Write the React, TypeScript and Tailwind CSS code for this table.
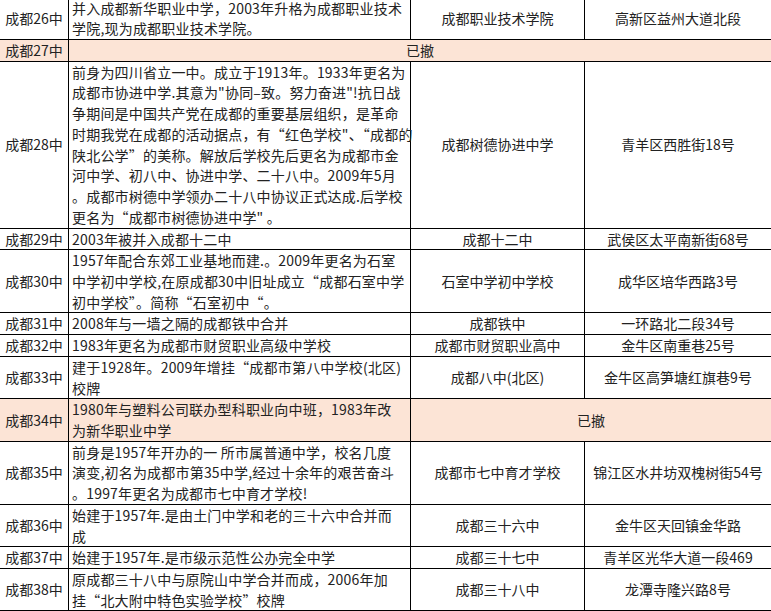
import React from "react";

type Row = {
  name: string;
  lines: string[];
  school?: string;
  addr?: string;
  closed?: "all" | "right";
};

const rows: Row[] = [
  {
    name: "成都26中",
    lines: ["并入成都新华职业中学，2003年升格为成都职业技术", "学院,现为成都职业技术学院。"],
    school: "成都职业技术学院",
    addr: "高新区益州大道北段",
  },
  { name: "成都27中", lines: ["已撤"], closed: "all" },
  {
    name: "成都28中",
    lines: [
      "前身为四川省立一中。成立于1913年。1933年更名为",
      "成都市协进中学.其意为\"协同–致。努力奋进\"!抗日战",
      "争期间是中国共产党在成都的重要基层组织，是革命",
      "时期我党在成都的活动据点，有“红色学校\"、“成都的",
      "陕北公学”的美称。解放后学校先后更名为成都市金",
      "河中学、初八中、协进中学、二十八中。2009年5月",
      "。成都市树德中学领办二十八中协议正式达成.后学校",
      "更名为“成都市树德协进中学\" 。",
    ],
    school: "成都树德协进中学",
    addr: "青羊区西胜街18号",
  },
  { name: "成都29中", lines: ["2003年被并入成都十二中"], school: "成都十二中", addr: "武侯区太平南新街68号" },
  {
    name: "成都30中",
    lines: [
      "1957年配合东郊工业基地而建.。2009年更名为石室",
      "中学初中学校,在原成都30中旧址成立“成都石室中学",
      "初中学校”。简称“石室初中“。",
    ],
    school: "石室中学初中学校",
    addr: "成华区培华西路3号",
  },
  { name: "成都31中", lines: ["2008年与一墙之隔的成都铁中合并"], school: "成都铁中", addr: "一环路北二段34号" },
  { name: "成都32中", lines: ["1983年更名为成都市财贸职业高级中学校"], school: "成都市财贸职业高中", addr: "金牛区南重巷25号" },
  {
    name: "成都33中",
    lines: ["建于1928年。2009年增挂“成都市第八中学校(北区)", "校牌"],
    school: "成都八中(北区)",
    addr: "金牛区高笋塘红旗巷9号",
  },
  {
    name: "成都34中",
    lines: ["1980年与塑料公司联办型科职业向中班，1983年改", "为新华职业中学"],
    closed: "right",
  },
  {
    name: "成都35中",
    lines: [
      "前身是1957年开办的一 所市属普通中学，校名几度",
      "演变,初名为成都市第35中学,经过十余年的艰苦奋斗",
      "。1997年更名为成都市七中育才学校!",
    ],
    school: "成都市七中育才学校",
    addr: "锦江区水井坊双槐树街54号",
  },
  {
    name: "成都36中",
    lines: ["始建于1957年.是由土门中学和老的三十六中合并而", "成"],
    school: "成都三十六中",
    addr: "金牛区天回镇金华路",
  },
  { name: "成都37中", lines: ["始建于1957年.是市级示范性公办完全中学"], school: "成都三十七中", addr: "青羊区光华大道一段469" },
  {
    name: "成都38中",
    lines: ["原成都三十八中与原院山中学合并而成，2006年加", "挂“北大附中特色实验学校”校牌"],
    school: "成都三十八中",
    addr: "龙潭寺隆兴路8号",
  },
];

const Line = ({ children }: { children: React.ReactNode }) => (
  <div className="h-[20.72px] whitespace-nowrap leading-[20.72px]">{children}</div>
);

const cell = "flex flex-col justify-center border-r border-black px-[3px]";

export default function App() {
  return (
    <div
      className="h-[611px] w-[771px] overflow-hidden bg-white text-[14px] text-[#222]"
      style={{ fontFamily: '"Noto Sans CJK SC", "Noto Sans", sans-serif' }}
    >
      <div className="-mt-[2.4px] w-[772px]">
        {rows.map((r) => (
          <div
            key={r.name}
            className={`flex border-b border-black ${r.closed ? "bg-[#fce4d6]" : "bg-white"}`}
          >
            <div className={`${cell} w-[69px] shrink-0 text-center`}>
              <Line>{r.name}</Line>
            </div>
            {r.closed === "all" ? (
              <div className={`${cell} flex-1 text-center`}>
                <Line>已撤</Line>
              </div>
            ) : (
              <>
                <div className={`${cell} w-[342px] shrink-0 text-left tracking-[0.2px]`}>
                  {r.lines.map((l, i) => (
                    <Line key={i}>{l}</Line>
                  ))}
                </div>
                {r.closed === "right" ? (
                  <div className={`${cell} flex-1 text-center`}>
                    <Line>已撤</Line>
                  </div>
                ) : (
                  <>
                    <div className={`${cell} w-[174px] shrink-0 text-center`}>
                      <Line>{r.school}</Line>
                    </div>
                    <div className={`${cell} flex-1 text-center`}>
                      <Line>{r.addr}</Line>
                    </div>
                  </>
                )}
              </>
            )}
          </div>
        ))}
      </div>
    </div>
  );
}
